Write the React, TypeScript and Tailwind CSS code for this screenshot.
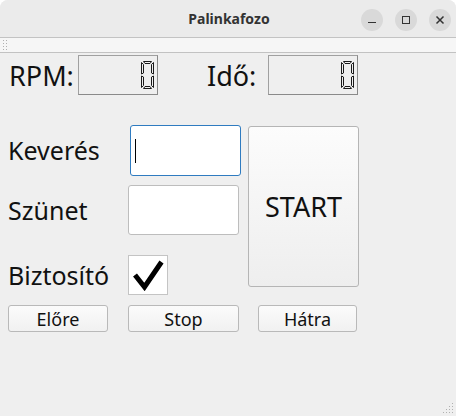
import React from 'react';

function LcdZero() {
  // hollow seven-segment "0"
  return (
    <svg width="13" height="28" viewBox="0 0 13 28" className="block">
      <g fill="none" stroke="#1a1a1a" strokeWidth="1">
        <polygon points="2.5,0.5 10.5,0.5 9,2.5 4,2.5" />
        <polygon points="0.5,1.5 2.5,3.5 2.5,12 0.5,13" />
        <polygon points="12.5,1.5 10.5,3.5 10.5,12 12.5,13" />
        <polygon points="0.5,15 2.5,16 2.5,24.5 0.5,26.5" />
        <polygon points="12.5,15 10.5,16 10.5,24.5 12.5,26.5" />
        <polygon points="4,25.5 9,25.5 10.5,27.5 2.5,27.5" />
      </g>
    </svg>
  );
}

function Lcd({ width }: { width: string }) {
  return (
    <div className={`${width} h-[40px] border border-t-[#a0a0a0] border-l-[#a0a0a0] border-b-[#8a8a8a] border-r-[#8a8a8a] bg-[#efefef] flex items-center justify-end pr-[3px]`}>
      <LcdZero />
    </div>
  );
}

function PushButton({ label, width }: { label: string; width: string }) {
  return (
    <button className={`${width} h-[27px] rounded-[3px] border border-[#b9b9b9] bg-gradient-to-b from-[#fbfbfb] to-[#f1f1f1] text-[18px] leading-none text-[#111] flex items-center justify-center`}>
      {label}
    </button>
  );
}

export default function App() {
  return (
    <div
      className="w-[456px] h-[416px] bg-white overflow-hidden"
      style={{ fontFamily: '"Noto Sans", "DejaVu Sans", sans-serif' }}
    >
      <div className="relative w-full h-full bg-[#efefef] rounded-t-[8px] overflow-hidden flex flex-col">
        {/* title bar */}
        <div className="h-[38px] shrink-0 bg-[#ebebeb] border-b border-[#c3c3c3] flex items-center relative">
          <div className="flex-1 text-center text-[14px] font-bold text-[#333] pl-[2px]">Palinkafozo</div>
          <div className="absolute right-[5px] top-[9px] flex gap-[12px]">
            <div className="w-[22px] h-[22px] rounded-full bg-[#d9d9d9] flex items-center justify-center">
              <div className="w-[8px] h-[1.5px] bg-[#333] mt-[5px]" />
            </div>
            <div className="w-[22px] h-[22px] rounded-full bg-[#d9d9d9] flex items-center justify-center">
              <div className="w-[8px] h-[8px] border-[1.5px] border-[#333]" />
            </div>
            <div className="w-[22px] h-[22px] rounded-full bg-[#d9d9d9] flex items-center justify-center">
              <svg width="10" height="10" viewBox="0 0 10 10">
                <path d="M1.5 1.5 L8.5 8.5 M8.5 1.5 L1.5 8.5" stroke="#333" strokeWidth="1.5" />
              </svg>
            </div>
          </div>
        </div>

        {/* toolbar strip */}
        <div className="h-[15px] shrink-0 bg-[#f6f6f6] border-b border-[#c2c2c2] flex items-center pl-[3px]">
          <div className="grid grid-cols-2 gap-x-[2px] gap-y-[2px]">
            {Array.from({ length: 8 }).map((_, i) => (
              <div key={i} className="w-[1px] h-[1px] bg-[#b0b0b0]" />
            ))}
          </div>
        </div>

        {/* RPM / Idő row */}
        <div className="flex items-center mt-[2px] h-[40px] text-[27px] text-[#111] leading-none">
          <span className="ml-[9px] w-[69px]">RPM:</span>
          <Lcd width="w-[80px]" />
          <span className="ml-[49px] w-[61px]">Idő:</span>
          <Lcd width="w-[90px]" />
        </div>

        {/* middle block */}
        <div className="flex mt-[30px] ml-[8px]">
          <div className="flex flex-col">
            <div className="flex items-center h-[51px]">
              <span className="w-[122px] text-[25px] text-[#111] leading-none">Keverés</span>
              <div className="w-[111px] h-[51px] rounded-[3px] border border-[#2f7bc0] bg-white flex items-center pl-[4px]">
                <div className="w-[1px] h-[24px] bg-black" />
              </div>
            </div>
            <div className="flex items-center h-[50px] mt-[9px]">
              <span className="w-[120px] text-[25px] text-[#111] leading-none">Szünet</span>
              <div className="w-[111px] h-[50px] rounded-[3px] border border-[#bdbdbd] bg-white" />
            </div>
            <div className="flex items-center h-[40px] mt-[20px]">
              <span className="w-[120px] text-[25px] text-[#111] leading-none">Biztosító</span>
              <div className="w-[40px] h-[40px] border border-[#c4c4c4] bg-white flex items-center justify-center">
                <svg width="34" height="32" viewBox="0 0 34 32">
                  <path d="M4 16 L13.5 28 L30.5 3" fill="none" stroke="#000" strokeWidth="5" strokeLinejoin="miter" />
                </svg>
              </div>
            </div>
          </div>
          <button className="ml-[7px] mt-[1px] w-[111px] h-[161px] rounded-[3px] border border-[#b5b5b5] bg-gradient-to-b from-[#fcfcfc] to-[#eeeeee] text-[27px] text-[#111] leading-none flex items-center justify-center">
            START
          </button>
        </div>

        {/* bottom buttons */}
        <div className="flex mt-[10px] ml-[8px]">
          <PushButton label="Előre" width="w-[100px]" />
          <div className="ml-[20px]"><PushButton label="Stop" width="w-[111px]" /></div>
          <div className="ml-[19px]"><PushButton label="Hátra" width="w-[99px]" /></div>
        </div>

        {/* size grip */}
        <div className="absolute right-[2px] bottom-[2px]">
          <svg width="12" height="12" viewBox="0 0 12 12">
            {[
              [10, 2], [7, 5], [10, 5], [4, 8], [7, 8], [10, 8], [1, 11], [4, 11], [7, 11], [10, 11],
            ].map(([x, y], i) => (
              <rect key={i} x={x} y={y - 1} width="1" height="1" fill="#b0b0b0" />
            ))}
          </svg>
        </div>
      </div>
    </div>
  );
}
